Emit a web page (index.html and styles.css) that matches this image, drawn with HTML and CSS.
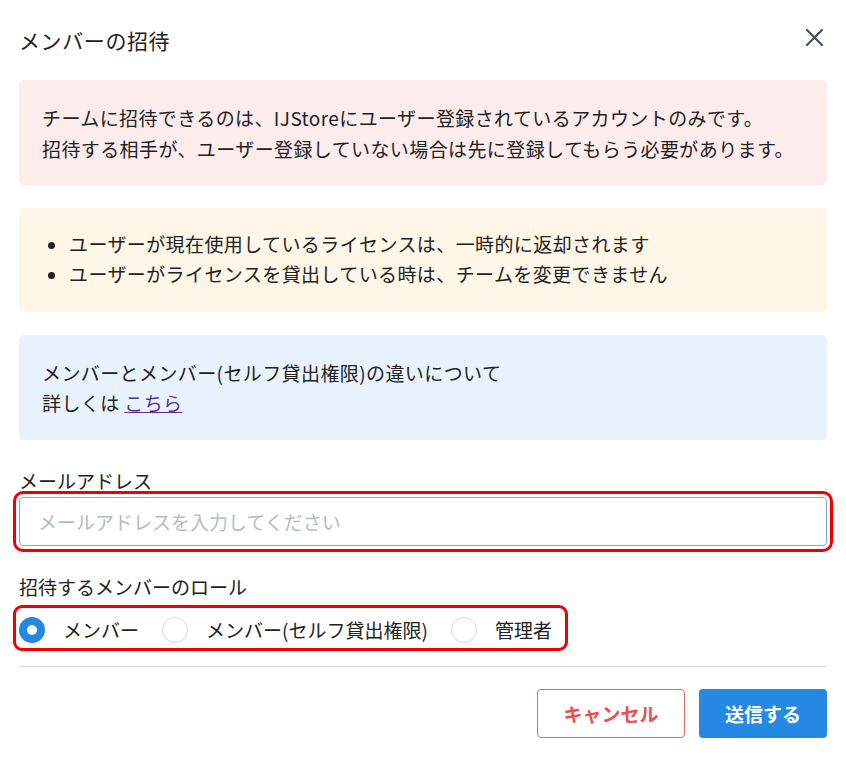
FILE: index.html
```html
<!DOCTYPE html>
<html lang="ja">
<head>
  <meta charset="UTF-8">
  <meta name="viewport" content="width=device-width, initial-scale=1.0">
  <title>メンバーの招待</title>
  <link rel="stylesheet" href="styles.css">
</head>
<body>
  <div class="dialog">
    <div class="dialog-header">
      <h2>メンバーの招待</h2>
      <button class="close" aria-label="閉じる">
        <svg width="17" height="17" viewBox="0 0 17 17">
          <path d="M1 1 L16 16 M16 1 L1 16" stroke="#4a5059" stroke-width="2.2" stroke-linecap="round" fill="none"/>
        </svg>
      </button>
    </div>

    <div class="notice notice-danger">
      チームに招待できるのは、IJStoreにユーザー登録されているアカウントのみです。<br>
      招待する相手が、ユーザー登録していない場合は先に登録してもらう必要があります。
    </div>

    <div class="notice notice-warning">
      <ul>
        <li>ユーザーが現在使用しているライセンスは、一時的に返却されます</li>
        <li>ユーザーがライセンスを貸出している時は、チームを変更できません</li>
      </ul>
    </div>

    <div class="notice notice-info">
      メンバーとメンバー(セルフ貸出権限)の違いについて<br>
      詳しくは <a href="#">こちら</a>
    </div>

    <div class="form-group">
      <label for="email">メールアドレス</label>
      <input type="text" id="email" class="highlight" placeholder="メールアドレスを入力してください">
    </div>

    <div class="form-group form-group-roles">
      <label>招待するメンバーのロール</label>
      <div class="roles highlight">
        <label class="role"><span class="radio checked"></span>メンバー</label>
        <label class="role"><span class="radio"></span>メンバー(セルフ貸出権限)</label>
        <label class="role"><span class="radio"></span>管理者</label>
      </div>
    </div>

    <div class="dialog-footer">
      <button class="btn btn-cancel">キャンセル</button>
      <button class="btn btn-submit">送信する</button>
    </div>
  </div>
</body>
</html>
```

FILE: styles.css
```css
body {
  font-family: "Noto Sans CJK JP", "Noto Sans", sans-serif;
  margin: 0;
  padding: 0;
  background-color: white;
  color: #222;
}
.dialog {
  padding: 0 19px;
}
.dialog-header {
  height: 80px;
  display: flex;
  align-items: center;
  justify-content: space-between;
}
.dialog-header h2 {
  margin: 0;
  font-size: 21px;
  font-weight: normal;
  letter-spacing: 0.6px;
}
.close {
  width: 25px;
  height: 25px;
  margin-top: -5px;
  padding: 0;
  border: none;
  background: none;
  display: flex;
  align-items: center;
  justify-content: center;
}
.notice {
  border-radius: 5px;
  padding: 22px 23px;
  font-size: 19px;
  line-height: 30px;
  letter-spacing: 0.4px;
  margin-bottom: 23px;
}
.notice-danger {
  background-color: #fdecec;
  line-height: 31px;
  padding: 22px 23px 21px;
}
.notice-warning {
  background-color: #fef6e7;
  padding: 21px 23px 23px;
}
.notice-warning ul {
  margin: 0;
  padding-left: 27px;
}
.notice-info {
  background-color: #e8f2fc;
  padding: 23px 23px 22px;
  margin-bottom: 0;
}
.notice a {
  color: #5b2d9c;
}
.form-group {
  margin-top: 28px;
}
.form-group > label {
  display: block;
  font-size: 19px;
  line-height: 26px;
  margin-bottom: 3px;
}
.form-group-roles > label {
  margin-bottom: 11px;
}
input {
  display: block;
  width: 100%;
  height: 49px;
  padding: 0 18px;
  font-family: inherit;
  font-size: 19px;
  border: 1px solid #7fa8da;
  border-radius: 4px;
  box-sizing: border-box;
  color: #222;
}
input::placeholder {
  color: #b4bbc5;
}
.highlight {
  outline: 3px solid #f00000;
  outline-offset: 3px;
}
.roles {
  display: inline-flex;
  align-items: center;
  height: 34px;
  padding-top: 3px;
  padding-right: 10px;
  box-sizing: border-box;
  border-radius: 3px;
}
.role {
  display: flex;
  align-items: center;
  gap: 18px;
  font-size: 19px;
  margin-right: 23px;
}
.role:last-child {
  margin-right: 0;
}
.radio {
  width: 26px;
  height: 26px;
  border: 1px solid #d3d7dd;
  border-radius: 50%;
  box-sizing: border-box;
  background: white;
}
.radio.checked {
  border: 8px solid #2589e4;
}
.dialog-footer {
  margin-top: 18px;
  border-top: 1px solid #d8dde4;
  padding-top: 22px;
  display: flex;
  justify-content: flex-end;
  gap: 14px;
}
.btn {
  height: 49px;
  font-family: inherit;
  font-size: 19px;
  font-weight: bold;
  border-radius: 4px;
  cursor: pointer;
}
.btn-cancel {
  width: 148px;
  background: white;
  color: #ea4f4f;
  border: 1px solid #e96666;
}
.btn-submit {
  width: 128px;
  background-color: #2589e4;
  color: white;
  border: none;
}
```
